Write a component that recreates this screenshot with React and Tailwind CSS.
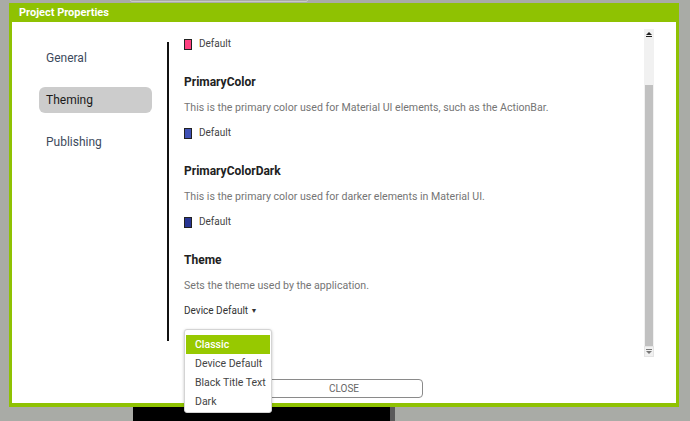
import React from 'react';

const NAV = ['General', 'Theming', 'Publishing'];

const PROPS = [
  { name: 'PrimaryColor', desc: 'This is the primary color used for Material UI elements, such as the ActionBar.', color: 'bg-[#3f51b5]' },
  { name: 'PrimaryColorDark', desc: 'This is the primary color used for darker elements in Material UI.', color: 'bg-[#283593]' },
];

const THEMES = ['Classic', 'Device Default', 'Black Title Text', 'Dark'];

const Swatch = ({ color }) => (
  <div className="h-[12px] flex items-center gap-[7px]">
    <div className={`w-[8px] h-[11px] border border-[#222] ${color}`} />
    <span className="text-[10px] text-[#444] leading-[12px]">Default</span>
  </div>
);

const Property = ({ name, desc, children }) => (
  <div className="mt-[25px]">
    <div className="text-[12px] font-bold text-[#212121] leading-[14px]">{name}</div>
    <div className="mt-[12px] text-[10.6px] text-[#757575] leading-[14px] whitespace-nowrap">{desc}</div>
    <div className="mt-[12px]">{children}</div>
  </div>
);

export default function App() {
  return (
    <div className="relative w-[690px] h-[421px] overflow-hidden bg-[#a9aba6] pt-[3px] pl-[9px]" style={{ fontFamily: 'Roboto, "Noto Sans", sans-serif' }}>
      {/* things behind the dialog */}
      <div className="absolute left-[130px] top-[-6px] w-[178px] h-[8px] border border-[#c9cac6] rounded-b-[2px]" />
      <div className="absolute left-[133px] top-[407px] w-[262px] h-[20px] bg-black border-r-[5px] border-[#5a5a5a]" />

      {/* dialog */}
      <div className="relative w-[670px] h-[404px] bg-[#8fc202] flex flex-col">
        <div className="h-[19px] pl-[10px] pt-[2px] flex items-center text-white font-bold text-[11px]">Project Properties</div>
        <div className="flex-1 mx-[3px] mb-[4px] bg-white flex flex-col">
          <div className="h-[342px] flex">
            <div className="w-[155px] pl-[27px] pt-[23px] flex flex-col gap-[16px]">
              {NAV.map((n) => (
                <div
                  key={n}
                  className={`w-[113px] h-[26px] px-[7px] rounded-[6px] flex items-center text-[12px] ${n === 'Theming' ? 'bg-[#cccccc] text-[#1a1a1a]' : 'text-[#3d4a5c]'}`}
                >
                  {n}
                </div>
              ))}
            </div>
            <div className="w-[2px] bg-[#111] mt-[20px] h-[299px]" />
            <div className="flex-1 pl-[15px] pt-[16px] overflow-hidden">
              <Swatch color="bg-[#ff4081]" />
              {PROPS.map((p) => (
                <Property key={p.name} name={p.name} desc={p.desc}>
                  <Swatch color={p.color} />
                </Property>
              ))}
              <Property name="Theme" desc="Sets the theme used by the application.">
                <div className="h-[12px] flex items-center text-[10px] text-[#333] leading-[12px] whitespace-pre">
                  Device Default <span className="text-[7px]">▼</span>
                </div>
              </Property>
            </div>
            {/* scrollbar */}
            <div className="w-[10px] mt-[7px] h-[328px] mr-[22px] flex flex-col bg-[#f1f1f1]">
              <div className="h-[10px] flex items-center justify-center">
                <svg width="6" height="5" viewBox="0 0 6 5"><path d="M3 0 L6 3 L0 3 Z" fill="#222" /><rect x="0" y="4" width="6" height="1" fill="#222" /></svg>
              </div>
              <div className="h-[46px]" />
              <div className="flex-1 bg-[#c1c1c1] mx-[1px]" />
              <div className="h-[11px] flex items-center justify-center border border-[#e4e4e4]">
                <svg width="6" height="5" viewBox="0 0 6 5"><rect x="0" y="0" width="6" height="1" fill="#777" /><path d="M0 2 L6 2 L3 5 Z" fill="#777" /></svg>
              </div>
            </div>
          </div>
          <div className="flex justify-center mt-[15px]">
            <button className="w-[158px] h-[19px] border border-[#8a8a8a] rounded-[4px] text-[10px] text-[#666] leading-none">CLOSE</button>
          </div>
        </div>
      </div>

      {/* theme dropdown */}
      <div className="absolute z-20 left-[184px] top-[329px] w-[88px] h-[84px] bg-white border border-[#d4d4d4] rounded-[3px] shadow-[0_1px_3px_rgba(0,0,0,0.25)] px-[1px] pt-[5px]">
        {THEMES.map((t, i) => (
          <div
            key={t}
            className={`h-[19px] pl-[9px] flex items-center whitespace-nowrap text-[10.5px] ${i === 0 ? 'bg-[#97c900] text-white font-medium' : 'text-[#444]'}`}
          >
            {t}
          </div>
        ))}
      </div>
    </div>
  );
}
